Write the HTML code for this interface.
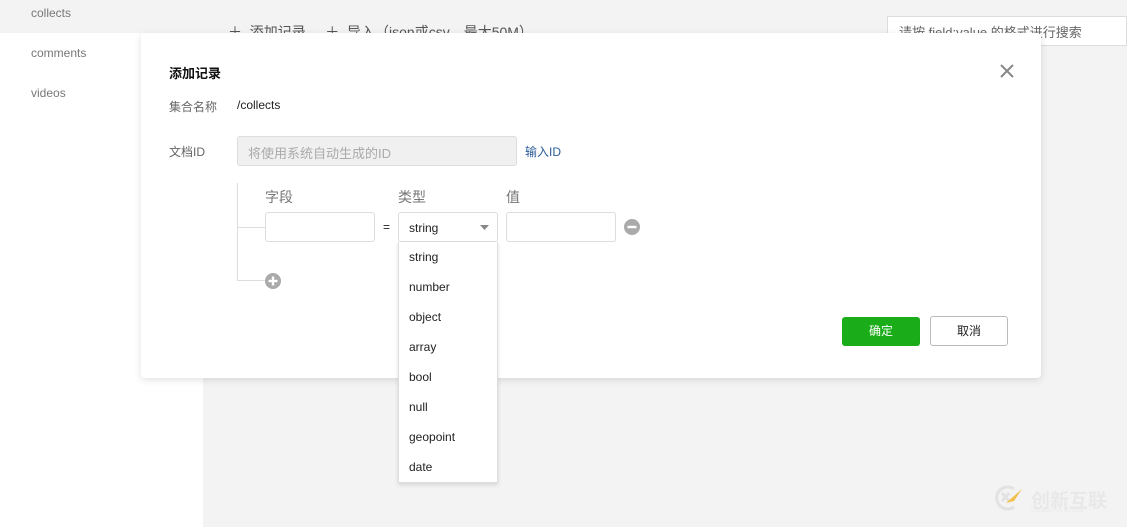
<!DOCTYPE html>
<html><head><meta charset="utf-8"><style>
*{margin:0;padding:0;box-sizing:border-box}
body{width:1127px;height:527px;overflow:hidden;background:#f3f3f3;font-family:"Liberation Sans","Noto Sans CJK SC",sans-serif;font-size:12px;color:#333;position:relative}
.a{position:absolute}
.side{left:0;top:33px;width:203px;height:494px;background:#fff}
.ni{left:31px;color:#777;font-size:12px}
.modal{left:141px;top:33px;width:900px;height:345px;background:#fff;border-radius:4px;box-shadow:0 2px 8px rgba(0,0,0,.12)}
.inp{border:1px solid #ddd;border-radius:3px;background:#fff}
.lbl{color:#666;font-size:12px}
.hd{color:#777;font-size:14px}
.dd{left:398px;top:242px;width:100px;height:241px;background:#fff;border:1px solid #ddd;border-top:none;box-shadow:0 2px 4px rgba(0,0,0,.12)}
.dd div{height:30px;line-height:30px;padding-left:10px;color:#222}
</style></head><body>
<div class="a" style="left:0;top:0;width:203px;height:33px;background:#f3f3f3"></div>
<div class="a ni" style="top:6px">collects</div>
<div class="a side"></div>
<div class="a ni" style="top:46px">comments</div>
<div class="a ni" style="top:86px">videos</div>
<div class="a" style="left:228px;top:22px;color:#555;font-size:14px;word-spacing:0">＋&nbsp; 添加记录 &nbsp; &nbsp; ＋&nbsp; 导入（json或csv，最大50M）</div>
<div class="a" style="left:887px;top:16px;width:240px;height:30px;background:#fff;border:1px solid #ddd;padding:5px 11px;color:#666;font-size:13px">请按 field:value 的格式进行搜索</div>
<div class="a modal"></div>
<div class="a" style="left:169px;top:63px;font-size:13px;font-weight:bold;color:#111">添加记录</div>
<svg class="a" style="left:1000px;top:64px" width="14" height="14"><path d="M1 1L13 13M13 1L1 13" stroke="#888" stroke-width="2"/></svg>
<div class="a lbl" style="left:169px;top:98px">集合名称</div>
<div class="a" style="left:237px;top:98px;color:#222">/collects</div>
<div class="a lbl" style="left:169px;top:143px">文档ID</div>
<div class="a" style="left:237px;top:136px;width:280px;height:30px;background:#f0f0f0;border:1px solid #ddd;border-radius:3px;padding:6px 10px;color:#aaa;font-size:13px">将使用系统自动生成的ID</div>
<div class="a" style="left:525px;top:143px;color:#2b5c99">输入ID</div>
<div class="a hd" style="left:265px;top:187px">字段</div>
<div class="a hd" style="left:398px;top:187px">类型</div>
<div class="a hd" style="left:506px;top:187px">值</div>
<div class="a" style="left:237px;top:183px;width:1px;height:98px;background:#ddd"></div>
<div class="a" style="left:237px;top:227px;width:28px;height:1px;background:#ddd"></div>
<div class="a" style="left:237px;top:280px;width:28px;height:1px;background:#ddd"></div>
<div class="a inp" style="left:265px;top:212px;width:110px;height:30px"></div>
<div class="a" style="left:383px;top:220px;color:#222">=</div>
<div class="a inp" style="left:398px;top:212px;width:100px;height:30px;padding:8px 10px;color:#222">string</div>
<svg class="a" style="left:480px;top:225px" width="9" height="5"><path d="M0 0H9L4.5 5Z" fill="#888"/></svg>
<div class="a inp" style="left:506px;top:212px;width:110px;height:30px"></div>
<svg class="a" style="left:624px;top:219px" width="16" height="16"><circle cx="8" cy="8" r="8" fill="#aaa"/><rect x="3.5" y="6.8" width="9" height="2.4" fill="#fff"/></svg>
<svg class="a" style="left:265px;top:273px" width="16" height="16"><circle cx="8" cy="8" r="8" fill="#aaa"/><rect x="3.5" y="6.8" width="9" height="2.4" fill="#fff"/><rect x="6.8" y="3.5" width="2.4" height="9" fill="#fff"/></svg>
<div class="a" style="left:842px;top:317px;width:78px;height:29px;background:#1aad19;border-radius:3px;color:#fff;text-align:center;line-height:29px">确定</div>
<div class="a" style="left:930px;top:316px;width:78px;height:30px;border:1px solid #bbb;border-radius:3px;color:#222;text-align:center;line-height:28px">取消</div>
<div class="a dd"><div>string</div><div>number</div><div>object</div><div>array</div><div>bool</div><div>null</div><div>geopoint</div><div>date</div></div>
<svg class="a" style="left:992px;top:483px" width="34" height="30"><path d="M22 6A11 11 0 1 0 22 24" stroke="#e2e2e2" stroke-width="3" fill="none"/><path d="M10 10L17 18M17 10L10 18" stroke="#e2e2e2" stroke-width="3"/><path d="M14 20L30 6L22 18Z" fill="#f0c04a"/></svg>
<div class="a" style="left:1031px;top:486px;color:#e8e8e8;font-size:19px;font-weight:bold">创新互联</div>
<div class="a" style="left:1031px;top:508px;color:#e8e8e8;font-size:5px">CHUANG XIN HU LIAN</div>
</body></html>
